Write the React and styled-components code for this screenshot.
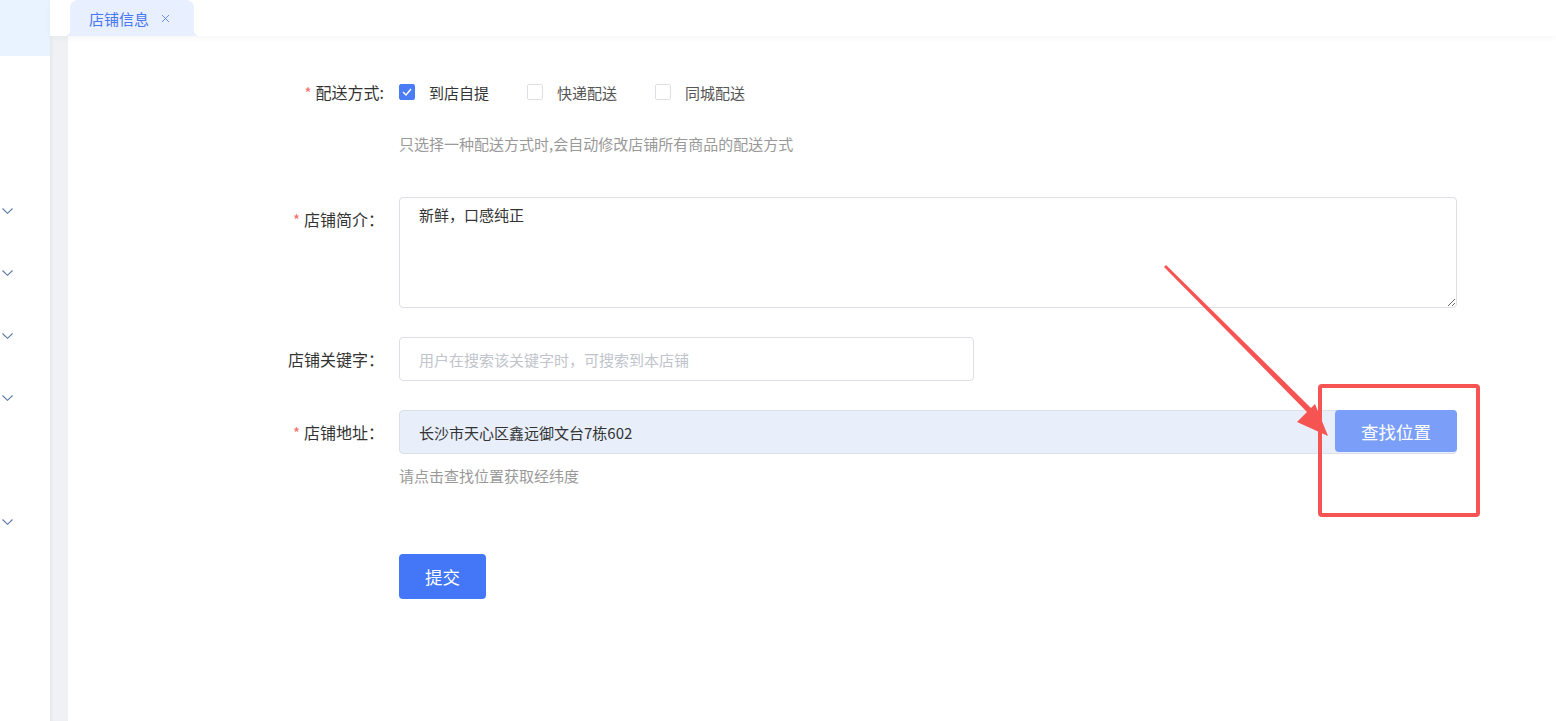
import React, { useState } from 'react';
import styled, { createGlobalStyle } from 'styled-components';
import { X } from 'lucide-react';

const GlobalStyle = createGlobalStyle`
  html, body { margin: 0; padding: 0; background: #fff; }
  body {
    font-family: "Noto Sans CJK SC", "Noto Sans", "Liberation Sans", sans-serif;
    font-size: 15px;
    color: #333;
  }
  * { box-sizing: border-box; }
`;

const Page = styled.div`
  position: relative;
  display: flex;
  width: 1556px;
  height: 721px;
  overflow: hidden;
`;

const Sidebar = styled.div`
  width: 50px;
  flex-shrink: 0;
  background: #fff;
  display: flex;
  flex-direction: column;
`;

const ActiveMenu = styled.div`
  height: 56px;
  background: #e8f3ff;
`;

const MenuArrow = styled.div`
  height: 6px;
  margin-top: ${p => p.$gap}px;
  padding-left: 2px;
  display: flex;
  align-items: center;
`;

const Main = styled.div`
  flex: 1;
  display: flex;
  flex-direction: column;
  background: #f0f1f5;
  box-shadow: inset 3px 0 4px -2px rgba(0, 0, 0, 0.06);
`;

const TabBar = styled.div`
  height: 36px;
  background: #fff;
  display: flex;
  align-items: flex-end;
  padding-left: 15px;
  position: relative;
  z-index: 1;
  box-shadow: 0 2px 6px rgba(0, 0, 0, 0.04);
`;

const Tab = styled.div`
  position: relative;
  height: 36px;
  width: 124px;
  margin-left: 5px;
  background: #e8effe;
  border-radius: 8px 8px 0 0;
  display: flex;
  align-items: center;
  padding-left: 19px;
  gap: 10px;
  color: #4a78f0;
  font-size: 15px;
  &::before, &::after {
    content: "";
    position: absolute;
    bottom: 0;
    width: 6px;
    height: 6px;
  }
  &::before { left: -6px; background: radial-gradient(circle at 0 0, transparent 6px, #e8effe 6.5px); }
  &::after { right: -6px; background: radial-gradient(circle at 100% 0, transparent 6px, #e8effe 6.5px); }
`;

const Body = styled.div`
  flex: 1;
  display: flex;
  padding-left: 18px;
`;

const Card = styled.div`
  flex: 1;
  background: #fff;
  padding: 41px 0 0 196px;
`;

const Form = styled.form`
  display: flex;
  flex-direction: column;
  width: 1192px;
`;

const Row = styled.div`
  display: flex;
  align-items: flex-start;
  margin-bottom: ${p => p.$mb || 0}px;
`;

const Label = styled.label`
  width: 135px;
  flex-shrink: 0;
  text-align: right;
  padding-right: 15px;
  line-height: ${p => p.$lh || 44}px;
  font-size: 16px;
  color: #333;
  white-space: nowrap;
`;

const Star = styled.span`
  color: #f56c6c;
  font-size: 15px;
  margin-right: 4px;
`;

const Field = styled.div`
  flex: 1;
  display: flex;
  flex-direction: column;
`;

const CheckGroup = styled.div`
  display: flex;
  align-items: center;
  height: 30px;
`;

const CheckItem = styled.label`
  display: flex;
  align-items: center;
  margin-right: 38px;
  font-size: 15px;
  color: ${p => (p.$checked ? '#333' : '#555')};
  cursor: pointer;
`;

const Box = styled.span`
  width: 16px;
  height: 16px;
  border-radius: 2px;
  border: 1px solid ${p => (p.$checked ? '#4a7cf6' : '#dcdfe6')};
  background: ${p => (p.$checked ? '#4a7cf6' : '#fff')};
  display: flex;
  align-items: center;
  justify-content: center;
  margin-right: 14px;
`;

const Help = styled.div`
  color: #999;
  font-size: 15px;
  margin-top: ${p => p.$mt}px;
  line-height: 20px;
`;

const TextArea = styled.textarea`
  width: 1058px;
  height: 111px;
  border: 1px solid #dcdfe6;
  border-radius: 4px;
  padding: 6px 19px;
  font-family: inherit;
  font-size: 15px;
  color: #333;
  line-height: 22px;
  resize: vertical;
  outline: none;
`;

const Input = styled.input`
  width: ${p => p.$w}px;
  height: 44px;
  border: 1px solid #dcdfe6;
  border-radius: 4px;
  padding: 0 19px;
  font-family: inherit;
  font-size: 15px;
  color: #333;
  background: #fff;
  outline: none;
  &::placeholder { color: #c0c4cc; }
`;

const InputGroup = styled.div`
  display: flex;
  width: 1058px;
  height: 44px;
  background: #e8effb;
  border: 1px solid #dcdfe6;
  border-radius: 4px;
  align-items: stretch;
`;

const GroupInput = styled.input`
  flex: 1;
  border: none;
  background: transparent;
  padding: 0 19px;
  font-family: inherit;
  font-size: 15px;
  color: #333;
  outline: none;
`;

const FindButton = styled.button`
  width: 122px;
  margin: -1px -1px 1px 0;
  border: none;
  border-radius: 4px;
  background: #7b9ff8;
  color: #fff;
  font-family: inherit;
  font-size: 17.5px;
  cursor: pointer;
`;

const Submit = styled.button`
  width: 87px;
  height: 45px;
  border: none;
  border-radius: 4px;
  background: #4477f8;
  color: #fff;
  font-family: inherit;
  font-size: 17.5px;
  cursor: pointer;
`;

const Annotation = styled.svg`
  position: absolute;
  left: 0;
  top: 0;
  pointer-events: none;
`;

const options = ['到店自提', '快递配送', '同城配送'];
const menuGaps = [152, 56, 57, 56, 118];

const Chevron = () => (
  <svg width="11" height="6" viewBox="0 0 11 6">
    <polyline points="0.5,0.5 5.5,5.3 10.5,0.5" fill="none" stroke="#5a78a8" strokeWidth="1.1" />
  </svg>
);

const App = () => {
  const [checked, setChecked] = useState(['到店自提']);
  const [intro, setIntro] = useState('新鲜，口感纯正');
  const [keyword, setKeyword] = useState('');
  const [address, setAddress] = useState('长沙市天心区鑫远御文台7栋602');

  const toggle = (name) => {
    setChecked(checked.includes(name) ? checked.filter(c => c !== name) : [...checked, name]);
  };

  return (
    <Page>
      <GlobalStyle />
      <Sidebar>
        <ActiveMenu />
        {menuGaps.map((g, i) => (
          <MenuArrow key={i} $gap={g}><Chevron /></MenuArrow>
        ))}
      </Sidebar>
      <Main>
        <TabBar>
          <Tab>店铺信息<X size={13} strokeWidth={1.5} /></Tab>
        </TabBar>
        <Body>
          <Card>
            <Form onSubmit={e => e.preventDefault()}>
              <Row $mb={43}>
                <Label $lh={30}><Star>*</Star>配送方式:</Label>
                <Field>
                  <CheckGroup>
                    {options.map(o => (
                      <CheckItem key={o} $checked={checked.includes(o)} onClick={() => toggle(o)}>
                        <Box $checked={checked.includes(o)}>
                          {checked.includes(o) && (
                            <svg width="10" height="8" viewBox="0 0 10 8">
                              <path d="M1 4 L4 7 L9 1" fill="none" stroke="#fff" strokeWidth="1.4" />
                            </svg>
                          )}
                        </Box>
                        {o}
                      </CheckItem>
                    ))}
                  </CheckGroup>
                  <Help $mt={27}>只选择一种配送方式时,会自动修改店铺所有商品的配送方式</Help>
                </Field>
              </Row>
              <Row $mb={29}>
                <Label $lh={44}><Star>*</Star>店铺简介：</Label>
                <Field>
                  <TextArea value={intro} onChange={e => setIntro(e.target.value)} />
                </Field>
              </Row>
              <Row $mb={29}>
                <Label $lh={44}>店铺关键字：</Label>
                <Field>
                  <Input
                    $w={575}
                    placeholder="用户在搜索该关键字时，可搜索到本店铺"
                    value={keyword}
                    onChange={e => setKeyword(e.target.value)}
                  />
                </Field>
              </Row>
              <Row $mb={68}>
                <Label $lh={44}><Star>*</Star>店铺地址：</Label>
                <Field>
                  <InputGroup>
                    <GroupInput value={address} onChange={e => setAddress(e.target.value)} />
                    <FindButton type="button">查找位置</FindButton>
                  </InputGroup>
                  <Help $mt={12}>请点击查找位置获取经纬度</Help>
                </Field>
              </Row>
              <Row>
                <Label />
                <Field>
                  <Submit type="submit">提交</Submit>
                </Field>
              </Row>
            </Form>
          </Card>
        </Body>
      </Main>
      <Annotation width="1556" height="721" viewBox="0 0 1556 721">
        <rect x="1320" y="386" width="158" height="129" rx="2" fill="none" stroke="#f65353" strokeWidth="4" />
        <polygon points="1164,267 1166,265 1313,410 1309,414" fill="#f65353" />
        <polygon points="1328,436 1297,422 1315,404" fill="#f65353" />
      </Annotation>
    </Page>
  );
};

export default App;
